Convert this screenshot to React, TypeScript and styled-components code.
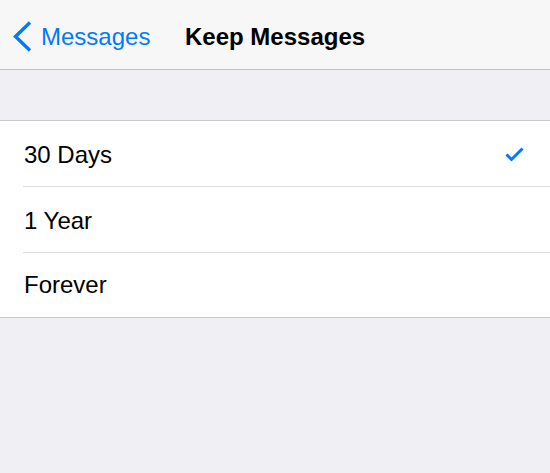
import React from "react";
import styled, { createGlobalStyle } from "styled-components";

const Global = createGlobalStyle`
  html, body { margin: 0; padding: 0; background: #efeff4; }
  body { font-family: "Liberation Sans", Arial, sans-serif; }
  #root { min-height: 473px; background: #efeff4; }
`;

const Page = styled.div`
  width: 550px;
  min-height: 473px;
  background: #efeff4;
  display: flex;
  flex-direction: column;
`;

const NavBar = styled.header`
  box-sizing: border-box;
  height: 70px;
  background: #f7f7f7;
  border-bottom: 1px solid #c4c4c6;
  display: flex;
  align-items: center;
  padding: 4px 0 0 13px;
`;

const BackButton = styled.div`
  display: flex;
  align-items: center;
  color: #007aff;
  font-size: 24px;
  gap: 8px;
  width: 172px;
`;

const Title = styled.div`
  font-size: 24px;
  font-weight: bold;
  color: #000;
`;

const Spacer = styled.div`
  height: 50px;
  border-bottom: 1px solid #c8c7cc;
`;

const List = styled.div`
  background: #fff;
  border-bottom: 1px solid #c8c7cc;
  display: flex;
  flex-direction: column;
`;

const Row = styled.div<{ $last?: boolean }>`
  box-sizing: border-box;
  height: ${(p) => (p.$last ? "64px" : "66px")};
  display: flex;
  align-items: center;
  justify-content: space-between;
  padding: ${(p) => (p.$last ? "0" : "1px")} 25px 0 24px;
  font-size: 24px;
  color: #000;
  position: relative;
  &::after {
    content: "";
    display: ${(p) => (p.$last ? "none" : "block")};
    position: absolute;
    left: 23px;
    right: 0;
    bottom: 0;
    height: 1px;
    background: #dedee2;
  }
`;

const Chevron = () => (
  <svg width="20" height="32" viewBox="0 0 20 32">
    <polyline
      points="17,1.5 2.5,15.5 17,29.5"
      fill="none"
      stroke="#007aff"
      strokeWidth="3.4"
      strokeLinecap="butt"
      strokeLinejoin="miter"
    />
  </svg>
);

const Check = () => (
  <svg width="20" height="16" viewBox="0 0 20 16">
    <polyline
      points="1.5,7.5 6.5,12.5 17.5,1.5"
      fill="none"
      stroke="#007aff"
      strokeWidth="3"
    />
  </svg>
);

const options = ["30 Days", "1 Year", "Forever"];

export default function App() {
  return (
    <Page>
      <Global />
      <NavBar>
        <BackButton>
          <Chevron />
          <span>Messages</span>
        </BackButton>
        <Title>Keep Messages</Title>
      </NavBar>
      <Spacer />
      <List>
        {options.map((o, i) => (
          <Row key={o} $last={i === options.length - 1}>
            <span>{o}</span>
            {i === 0 && <Check />}
          </Row>
        ))}
      </List>
    </Page>
  );
}
